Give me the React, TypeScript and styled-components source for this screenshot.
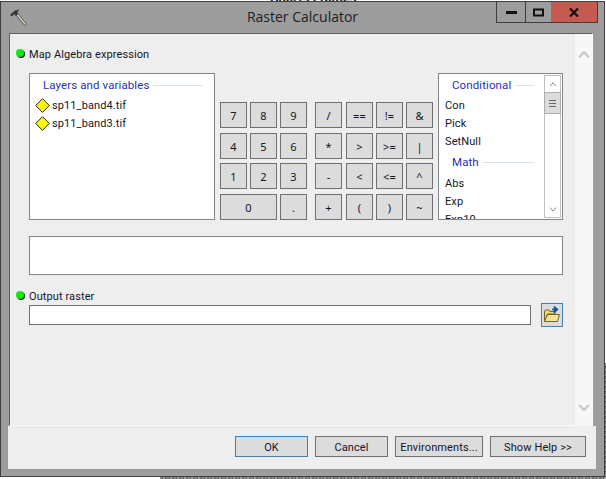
import styled, { createGlobalStyle } from "styled-components";

const GlobalStyle = createGlobalStyle`
  html, body {
    margin: 0;
    padding: 0;
    background: #fff;
  }
  * {
    box-sizing: border-box;
  }
`;

const Page = styled.div`
  position: relative;
  width: 606px;
  height: 479px;
  overflow: hidden;
  padding-top: 1px;
  font-family: Roboto, Tahoma, sans-serif;
  font-size: 11px;
  letter-spacing: 0.1px;
  color: #15151f;
  background:
    repeating-linear-gradient(90deg, #8a8a8a 0 2px, #5c5c5c 2px 3px, #a6a6a6 3px 5px, #6e6e6e 5px 7px) 160px 477px / 446px 2px no-repeat,
    repeating-linear-gradient(0deg, #777 0 2px, #4f4f4f 2px 3px, #999 3px 5px) 605px 363px / 1px 116px no-repeat,
    #fff;
`;

const BehindText = styled.div`
  position: absolute;
  top: -9px;
  left: 270px;
  font-size: 13px;
  font-weight: 700;
  color: #222;
`;

const Window = styled.div`
  position: relative;
  width: 605px;
  height: 476px;
  background: #9d9d9d;
  border: 1px solid #3f3f3f;
  display: flex;
  flex-direction: column;
`;

const TitleBar = styled.div`
  height: 31px;
  flex: none;
  display: grid;
  grid-template-columns: 1fr auto 1fr;
  align-items: start;
`;

const HammerWrap = styled.div`
  padding: 6px 0 0 8px;
  height: 28px;
`;

const Title = styled.div`
  font-family: "Open Sans", "Noto Sans", sans-serif;
  font-size: 14px;
  line-height: 20px;
  padding-top: 5px;
  letter-spacing: 0;
  color: #1d2024;
`;

const Captions = styled.div`
  justify-self: end;
  display: flex;
  height: 21px;
  margin-right: 6px;
  border: 1px solid #3d3d3d;
  border-top: 0;
`;

const CaptionButton = styled.div<{ $w: number; $close?: boolean }>`
  width: ${(p) => p.$w}px;
  display: flex;
  align-items: center;
  justify-content: center;
  background: ${(p) => (p.$close ? "#c55a50" : "transparent")};
  border-left: ${(p) => (p.$close ? "0" : "1px solid #3d3d3d")};
  &:first-child {
    border-left: 0;
  }
`;

const Panel = styled.div`
  flex: none;
  height: 393px;
  margin: 0 11px 0 8px;
  display: flex;
  background: #eee;
  border-top: 1px solid #5c6066;
  border-left: 1px solid #5c6066;
  border-right: 1px solid #fcfcfc;
  border-bottom: 1px solid #fafafa;
`;

const Content = styled.div`
  flex: 1;
  min-width: 0;
  padding: 12px 12px 0 19px;
`;

const ScrollColumn = styled.div`
  flex: none;
  width: 17px;
  background: #f7f7f7;
  display: flex;
  flex-direction: column;
  justify-content: space-between;
  align-items: center;
  padding: 17px 0 14px;
`;

const Label = styled.div`
  position: relative;
  height: 15px;
  line-height: 15px;
  padding-top: 1px;
`;

const Dot = styled.span`
  position: absolute;
  left: -13px;
  top: 3px;
  width: 8px;
  height: 8px;
  border-radius: 50%;
  background: #0ee80e;
  box-shadow: 1px 1px 0 #222;
`;

const MainRow = styled.div`
  display: flex;
  gap: 5px;
  height: 147px;
  margin-top: 12px;
`;

const ListBox = styled.div<{ $w: number }>`
  flex: none;
  width: ${(p) => p.$w}px;
  height: 147px;
  display: flex;
  overflow: hidden;
  background: #fff;
  border: 1px solid #82868c;
`;

const ListBody = styled.div`
  flex: 1;
  min-width: 0;
  overflow: hidden;
`;

const GroupHead = styled.div<{ $h?: number; $right: number }>`
  display: flex;
  align-items: center;
  gap: 4px;
  height: ${(p) => p.$h ?? 22}px;
  padding: 0 ${(p) => p.$right}px 0 13px;
  font-size: 11.5px;
  color: #2a2fb4;
  &::after {
    content: "";
    flex: 1;
    height: 1px;
    background: #d6e4f2;
  }
`;

const LayerItem = styled.div`
  display: flex;
  align-items: center;
  gap: 2px;
  height: 18px;
  padding-left: 5px;
  &:first-of-type {
    margin-top: -1px;
  }
`;

const FuncItem = styled.div`
  height: 18px;
  line-height: 20px;
  padding-left: 6px;
`;

const Scrollbar = styled.div`
  flex: none;
  width: 17px;
  margin: 1px 1px 1px 0;
  border: 1px solid #bfbfbf;
  display: flex;
  flex-direction: column;
  background: #fff;
`;

const ArrowButton = styled.div`
  height: 16px;
  display: flex;
  align-items: center;
  justify-content: center;
  flex: none;
`;

const Thumb = styled.div`
  height: 22px;
  flex: none;
  display: flex;
  flex-direction: column;
  gap: 2px;
  align-items: center;
  justify-content: center;
  background: #dcdcdc;
  border: 1px solid #adadad;
  margin: 0 -1px;
  i {
    display: block;
    width: 7px;
    height: 1px;
    background: #666;
  }
`;

const Track = styled.div`
  flex: 1;
`;

const Keypad = styled.div`
  flex: none;
  display: flex;
  gap: 8px;
  margin-top: 29px;
`;

const KeyGrid = styled.div<{ $cols: string }>`
  display: grid;
  grid-template-columns: ${(p) => p.$cols};
  grid-template-rows: 31px 30px 31px 26px;
`;

const Key = styled.div<{ $span?: number }>`
  grid-column: span ${(p) => p.$span ?? 1};
  width: ${(p) => (p.$span ? "57px" : "27px")};
  height: 26px;
  display: flex;
  align-items: center;
  justify-content: center;
  font-family: "Noto Sans", sans-serif;
  font-size: 11px;
  background: #dcdcdc;
  border: 1px solid #707070;
`;

const Expression = styled.div`
  height: 39px;
  margin-top: 16px;
  background: #fff;
  border: 1px solid #82868c;
`;

const OutputLabel = styled(Label)`
  margin-top: 13px;
`;

const OutputRow = styled.div`
  display: flex;
  align-items: center;
  justify-content: space-between;
  height: 24px;
`;

const OutputInput = styled.div`
  width: 502px;
  height: 20px;
  background: #fff;
  border: 1px solid #707070;
`;

const FolderButton = styled.div`
  width: 22px;
  height: 24px;
  display: flex;
  align-items: center;
  justify-content: center;
  background: #dcdcdc;
  border: 1px solid #3f80b5;
`;

const Footer = styled.div`
  flex: 1;
  margin: 0 8px 7px 7px;
  background: #eee;
  display: flex;
  justify-content: flex-end;
  gap: 7px;
  padding: 10px 10px 0 0;
`;

const FootButton = styled.div<{ $w: number; $default?: boolean }>`
  width: ${(p) => p.$w}px;
  height: 21px;
  padding-top: 1px;
  display: flex;
  align-items: center;
  justify-content: center;
  background: #dcdcdc;
  border: 1px solid ${(p) => (p.$default ? "#3f80b5" : "#707070")};
`;

const Hammer = () => (
  <svg width="18" height="18" viewBox="0 0 18 18">
    <path d="M7 5 L16 16" stroke="#5a5a4e" strokeWidth="3" strokeLinecap="round" />
    <path d="M7 5 L16 16" stroke="#d8d4c0" strokeWidth="1.4" strokeLinecap="round" />
    <path d="M1 7 L3 5 L6 2.5 L11 1.5 L8 4 L9 6 L7 8 L5 6 L3 8.5 Z" fill="#33363a" />
  </svg>
);

const Diamond = () => (
  <svg width="15" height="15" viewBox="0 0 15 15">
    <path d="M7.5 .7 L14.3 7.5 L7.5 14.3 L.7 7.5 Z" fill="#fdfd00" stroke="#222" strokeWidth="1" />
  </svg>
);

const Chevron = ({ up, size = 8, color = "#666", width = 1 }: { up?: boolean; size?: number; color?: string; width?: number }) => (
  <svg width={size} height={size * 0.6} viewBox="0 0 10 6">
    <path d={up ? "M1 5.2 L5 1 L9 5.2" : "M1 .8 L5 5 L9 .8"} fill="none" stroke={color} strokeWidth={width} />
  </svg>
);

const FolderIcon = () => (
  <svg width="18" height="18" viewBox="0 0 18 18">
    <path d="M1.5 15.5 L1.5 5 L2.5 4 L6 4 L7 5.5 L12 5.5 L12 8 L4.5 8 Z" fill="#f0d67e" stroke="#7a6420" strokeWidth="1" />
    <path d="M1.5 15.5 L4.5 8.5 L16.5 8.5 L14.5 15.5 Z" fill="#f6e29a" stroke="#7a6420" strokeWidth="1" />
    <path d="M9 3.5 L13 3.5 M11.5 1 L14.5 3.5 L11.5 6 Z" stroke="#0d4f9e" strokeWidth="1.4" fill="#0d4f9e" />
  </svg>
);

const numberKeys = ["7", "8", "9", "4", "5", "6", "1", "2", "3"];
const opKeys = ["/", "==", "!=", "&", "*", ">", ">=", "|", "-", "<", "<=", "^", "+", "(", ")", "~"];

export default function App() {
  return (
    <Page>
      <GlobalStyle />
      <BehindText>Charts Frames</BehindText>
      <Window>
        <TitleBar>
          <HammerWrap>
            <Hammer />
          </HammerWrap>
          <Title>Raster Calculator</Title>
          <Captions>
            <CaptionButton $w={28}>
              <svg width="11" height="3" viewBox="0 0 11 3">
                <rect width="11" height="3" fill="#111" />
              </svg>
            </CaptionButton>
            <CaptionButton $w={26}>
              <svg width="11" height="9" viewBox="0 0 11 9">
                <rect x="1" y="1.5" width="9" height="6" fill="none" stroke="#111" strokeWidth="2" />
              </svg>
            </CaptionButton>
            <CaptionButton $w={46} $close>
              <svg width="10" height="9" viewBox="0 0 10 9">
                <path d="M1 .5 L9 8.5 M9 .5 L1 8.5" stroke="#111" strokeWidth="2.2" />
              </svg>
            </CaptionButton>
          </Captions>
        </TitleBar>
        <Panel>
          <Content>
            <Label>
              <Dot />
              Map Algebra expression
            </Label>
            <MainRow>
              <ListBox $w={186}>
                <ListBody>
                  <GroupHead $right={11}>Layers and variables</GroupHead>
                  <LayerItem>
                    <Diamond />
                    sp11_band4.tif
                  </LayerItem>
                  <LayerItem>
                    <Diamond />
                    sp11_band3.tif
                  </LayerItem>
                </ListBody>
              </ListBox>
              <Keypad>
                <KeyGrid $cols="30px 30px 27px">
                  {numberKeys.map((k) => (
                    <Key key={k}>{k}</Key>
                  ))}
                  <Key $span={2}>0</Key>
                  <Key>.</Key>
                </KeyGrid>
                <KeyGrid $cols="31px 30px 30px 27px">
                  {opKeys.map((k) => (
                    <Key key={k}>{k}</Key>
                  ))}
                </KeyGrid>
              </Keypad>
              <ListBox $w={125}>
                <ListBody>
                  <GroupHead $right={10}>Conditional</GroupHead>
                  <FuncItem>Con</FuncItem>
                  <FuncItem>Pick</FuncItem>
                  <FuncItem>SetNull</FuncItem>
                  <GroupHead $right={10} $h={24}>Math</GroupHead>
                  <FuncItem>Abs</FuncItem>
                  <FuncItem>Exp</FuncItem>
                  <FuncItem>Exp10</FuncItem>
                </ListBody>
                <Scrollbar>
                  <ArrowButton>
                    <Chevron up />
                  </ArrowButton>
                  <Thumb>
                    <i />
                    <i />
                    <i />
                  </Thumb>
                  <Track />
                  <ArrowButton>
                    <Chevron />
                  </ArrowButton>
                </Scrollbar>
              </ListBox>
            </MainRow>
            <Expression />
            <OutputLabel>
              <Dot />
              Output raster
            </OutputLabel>
            <OutputRow>
              <OutputInput />
              <FolderButton>
                <FolderIcon />
              </FolderButton>
            </OutputRow>
          </Content>
          <ScrollColumn>
            <Chevron up size={12} color="#c9c9c9" width={2} />
            <Chevron size={12} color="#c9c9c9" width={2} />
          </ScrollColumn>
        </Panel>
        <Footer>
          <FootButton $w={73} $default>OK</FootButton>
          <FootButton $w={73}>Cancel</FootButton>
          <FootButton $w={88}>Environments...</FootButton>
          <FootButton $w={96}>Show Help &gt;&gt;</FootButton>
        </Footer>
      </Window>
    </Page>
  );
}
